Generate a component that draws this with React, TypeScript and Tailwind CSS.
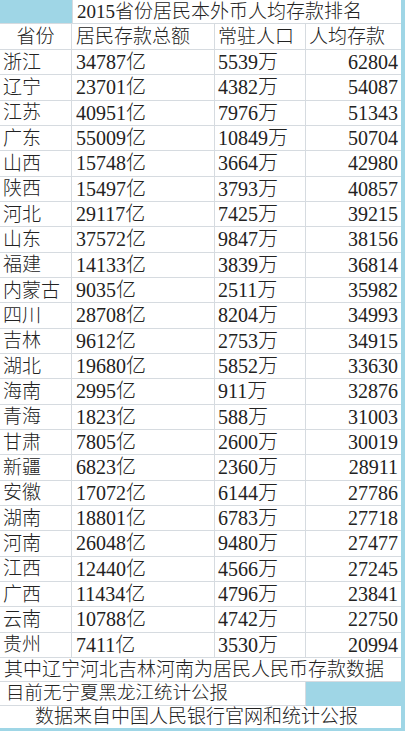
import React from "react";

const rows: [string, string, string, string][] = [
  ["浙江", "34787亿", "5539万", "62804"],
  ["辽宁", "23701亿", "4382万", "54087"],
  ["江苏", "40951亿", "7976万", "51343"],
  ["广东", "55009亿", "10849万", "50704"],
  ["山西", "15748亿", "3664万", "42980"],
  ["陕西", "15497亿", "3793万", "40857"],
  ["河北", "29117亿", "7425万", "39215"],
  ["山东", "37572亿", "9847万", "38156"],
  ["福建", "14133亿", "3839万", "36814"],
  ["内蒙古", "9035亿", "2511万", "35982"],
  ["四川", "28708亿", "8204万", "34993"],
  ["吉林", "9612亿", "2753万", "34915"],
  ["湖北", "19680亿", "5852万", "33630"],
  ["海南", "2995亿", "911万", "32876"],
  ["青海", "1823亿", "588万", "31003"],
  ["甘肃", "7805亿", "2600万", "30019"],
  ["新疆", "6823亿", "2360万", "28911"],
  ["安徽", "17072亿", "6144万", "27786"],
  ["湖南", "18801亿", "6783万", "27718"],
  ["河南", "26048亿", "9480万", "27477"],
  ["江西", "12440亿", "4566万", "27245"],
  ["广西", "11434亿", "4796万", "23841"],
  ["云南", "10788亿", "4742万", "22750"],
  ["贵州", "7411亿", "3530万", "20994"],
];

const font = {
  fontFamily: '"Liberation Serif", "Noto Sans CJK SC", serif',
};

export default function App() {
  return (
    <div
      className="w-[405px] h-[731px] bg-[#9fd6e6] overflow-hidden text-[19px] leading-none text-[#222] font-light"
      style={font}
    >
      <div className="w-[401px] flex flex-col">
        {/* title */}
        <div className="grid grid-cols-[72px_329px] h-[24px]">
          <div className="bg-[#9fd6e6] border-b border-[#d6dbe0]" />
          <div className="bg-white border-b border-l border-[#d6dbe0] flex items-center pl-[4px] text-[19px] whitespace-nowrap">
            2015省份居民本外币人均存款排名
          </div>
        </div>
        {/* header */}
        <div className="grid grid-cols-[72px_143px_91px_95px] h-[26px] bg-white">
          <div className="border-b border-r border-[#d6dbe0] flex items-center justify-center">
            省份
          </div>
          <div className="border-b border-r border-[#d6dbe0] flex items-center pl-[4px]">
            居民存款总额
          </div>
          <div className="border-b border-r border-[#d6dbe0] flex items-center pl-[3px]">
            常驻人口
          </div>
          <div className="border-b border-[#d6dbe0] flex items-center pl-[3px]">
            人均存款
          </div>
        </div>
        {rows.map((r) => (
          <div
            key={r[0]}
            className="grid grid-cols-[72px_143px_91px_95px] h-[25.33px] bg-white"
          >
            <div className="border-b border-r border-[#d6dbe0] flex items-center pl-[3px]">
              {r[0]}
            </div>
            <div className="border-b border-r border-[#d6dbe0] flex items-center pl-[4px] text-[20px]">
              {r[1]}
            </div>
            <div className="border-b border-r border-[#d6dbe0] flex items-center pl-[3px] text-[20px]">
              {r[2]}
            </div>
            <div className="border-b border-[#d6dbe0] flex items-center justify-end pr-[3px] text-[20px]">
              {r[3]}
            </div>
          </div>
        ))}
        <div className="h-[24px] bg-white border-b border-[#d6dbe0] flex items-center pl-[4px] text-[19px] whitespace-nowrap">
          其中辽宁河北吉林河南为居民人民币存款数据
        </div>
        <div className="grid grid-cols-[306px_95px] h-[24px]">
          <div className="bg-white border-b border-r border-[#d6dbe0] flex items-center pl-[6px] text-[18.5px] whitespace-nowrap">
            目前无宁夏黑龙江统计公报
          </div>
          <div className="bg-[#9fd6e6]" />
        </div>
        <div className="h-[22px] bg-white flex items-center pl-[35px] text-[19px] whitespace-nowrap">
          数据来自中国人民银行官网和统计公报
        </div>
      </div>
    </div>
  );
}
